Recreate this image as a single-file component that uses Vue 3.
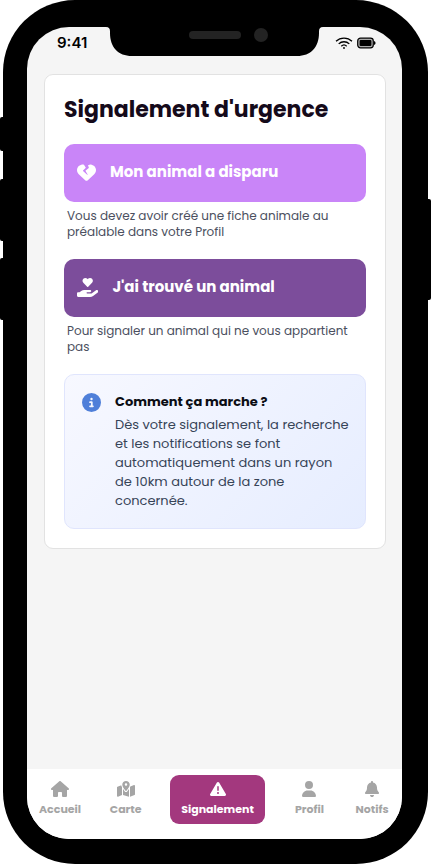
<script setup>
const icons = {
  house: {
    box: '0 0 576 512',
    d: 'M575.8 255.5c0 18-15 32.1-32 32.1h-32l.7 160.2c0 2.7-.2 5.4-.5 8.1V472c0 22.1-17.9 40-40 40H456c-1.1 0-2.2 0-3.3-.1c-1.4 .1-2.8 .1-4.2 .1H416 392c-22.1 0-40-17.9-40-40V448 384c0-17.7-14.3-32-32-32H256c-17.7 0-32 14.3-32 32v64 24c0 22.1-17.9 40-40 40H160 128.1c-1.5 0-3-.1-4.5-.2c-1.2 .1-2.4 .2-3.6 .2H104c-22.1 0-40-17.9-40-40V360c0-.9 0-1.9 .1-2.8V287.6H32c-18 0-32-14-32-32.1c0-9 3-17 10-24L266.4 8c7-7 15-8 22-8s15 2 21 7L564.8 231.5c8 7 12 15 11 24z',
  },
  map: {
    box: '0 0 576 512',
    d: 'M408 120c0 54.6-73.1 151.9-105.2 192c-7.7 9.6-22 9.6-29.6 0C241.1 271.9 168 174.6 168 120C168 53.7 221.7 0 288 0s120 53.7 120 120zm8 80.4c3.5-6.9 6.7-13.8 9.6-20.6c.5-1.2 1-2.5 1.5-3.7l116-46.4C558.9 123.4 576 135 576 152V422.8c0 9.8-6 18.6-15.1 22.3L416 503V200.4zM137.6 138.3c2.4 14.1 7.2 28.3 12.8 41.5c2.9 6.8 6.1 13.7 9.6 20.6V451.8L32.9 502.7C17.1 509 0 497.4 0 480.4V209.6c0-9.8 6-18.6 15.1-22.3l122.6-49zM327.8 332c13.9-17.4 35.7-45.7 56.2-77V504.3L192 449.4V255c20.5 31.3 42.3 59.6 56.2 77c20.5 25.6 59.1 25.6 79.6 0zM288 152a40 40 0 1 0 0-80 40 40 0 1 0 0 80z',
  },
  warning: {
    box: '0 0 512 512',
    d: 'M256 32c14.2 0 27.3 7.5 34.5 19.8l216 368c7.3 12.4 7.3 27.7 .2 40.1S486.3 480 472 480H40c-14.3 0-27.6-7.7-34.7-20.1s-7-27.8 .2-40.1l216-368C228.7 39.5 241.8 32 256 32zm0 128c-13.3 0-24 10.7-24 24V296c0 13.3 10.7 24 24 24s24-10.7 24-24V184c0-13.3-10.7-24-24-24zm32 224a32 32 0 1 0 -64 0 32 32 0 1 0 64 0z',
  },
  user: {
    box: '0 0 448 512',
    d: 'M224 256A128 128 0 1 0 224 0a128 128 0 1 0 0 256zm-45.7 48C79.8 304 0 383.8 0 482.3C0 498.7 13.3 512 29.7 512H418.3c16.4 0 29.7-13.3 29.7-29.7C448 383.8 368.2 304 269.7 304H178.3z',
  },
  bell: {
    box: '0 0 448 512',
    d: 'M224 0c-17.7 0-32 14.3-32 32V51.2C119 66 64 130.6 64 208v18.8c0 47-17.3 92.4-48.5 127.6l-7.4 8.3c-8.4 9.4-10.4 22.9-5.3 34.4S19.4 416 32 416H416c12.6 0 24-7.4 29.2-18.9s3.1-25-5.3-34.4l-7.4-8.3C401.3 319.2 384 273.9 384 226.8V208c0-77.4-55-142-128-156.8V32c0-17.7-14.3-32-32-32zm45.3 493.3c12-12 18.7-28.3 18.7-45.3H224 160c0 17 6.7 33.3 18.7 45.3s28.3 18.7 45.3 18.7s33.3-6.7 45.3-18.7z',
  },
  info: {
    box: '0 0 512 512',
    d: 'M256 512A256 256 0 1 0 256 0a256 256 0 1 0 0 512zM216 336h24V272H216c-13.3 0-24-10.7-24-24s10.7-24 24-24h48c13.3 0 24 10.7 24 24v88h8c13.3 0 24 10.7 24 24s-10.7 24-24 24H216c-13.3 0-24-10.7-24-24s10.7-24 24-24zm40-208a32 32 0 1 1 0 64 32 32 0 1 1 0-64z',
  },
  heartCrack: {
    box: '0 0 512 512',
    d: 'M119.4 44.1c23.3-3.9 46.8-1.9 68.6 5.3l49.8 77.5-75.4 75.4c-1.5 1.5-2.4 3.6-2.3 5.8s1 4.2 2.6 5.7l112 104c2.9 2.7 7.4 2.9 10.5 .3s3.8-7 1.7-10.4l-60.4-98.1 90.7-75.6c2.6-2.1 3.5-5.7 2.4-8.8L296.8 61.8c28.5-16.7 62.4-23.2 95.7-17.6C461.5 55.6 512 115.2 512 185.1v5.8c0 41.5-17.2 81.2-47.6 109.5L283.7 469.1c-7.5 7-17.4 10.9-27.7 10.9s-20.2-3.9-27.7-10.9L47.6 300.4C17.2 272.1 0 232.4 0 190.9v-5.8c0-69.9 50.5-129.5 119.4-141z',
  },
  handHeart: {
    box: '0 0 576 512',
    d: 'M148 76.6C148 34.3 182.3 0 224.6 0c20.3 0 39.8 8.1 54.1 22.4l9.3 9.3 9.3-9.3C311.6 8.1 331.1 0 351.4 0C393.7 0 428 34.3 428 76.6c0 20.3-8.1 39.8-22.4 54.1L302.1 234.1c-7.8 7.8-20.5 7.8-28.3 0L170.4 130.7C156.1 116.3 148 96.9 148 76.6zM568.2 336.3c13.1 17.8 9.3 42.8-8.5 55.9L433.1 485.5c-23.4 17.2-51.6 26.5-80.7 26.5H192 32c-17.7 0-32-14.3-32-32V416c0-17.7 14.3-32 32-32H68.8l44.9-36c22.7-18.2 50.9-28 80-28H272h16 64c17.7 0 32 14.3 32 32s-14.3 32-32 32H288 272c-8.8 0-16 7.2-16 16s7.2 16 16 16H392.6l119.7-88.2c17.8-13.1 42.8-9.3 55.9 8.5z',
  },
}

const actions = [
  {
    label: 'Mon animal a disparu',
    icon: icons.heartCrack,
    tone: 'lost',
    hint: 'Vous devez avoir créé une fiche animale au préalable dans votre Profil',
  },
  {
    label: "J'ai trouvé un animal",
    icon: icons.handHeart,
    tone: 'found',
    hint: 'Pour signaler un animal qui ne vous appartient pas',
  },
]

const tabs = [
  { label: 'Accueil', icon: icons.house },
  { label: 'Carte', icon: icons.map },
  { label: 'Signalement', icon: icons.warning, active: true },
  { label: 'Profil', icon: icons.user },
  { label: 'Notifs', icon: icons.bell },
]
</script>

<template>
  <div class="phone">
    <span class="side side-mute"></span>
    <span class="side side-up"></span>
    <span class="side side-down"></span>
    <span class="side side-power"></span>

    <div class="screen">
      <header class="status">
        <span class="time">9:41</span>
        <svg class="notch" viewBox="0 0 217 29" aria-hidden="true">
          <path d="M0 0C3 0 4 1.500 4 4.500V6C4 20 12 29 26 29H191C205 29 213 20 213 6V4.500C213 1.500 214 0 217 0Z" fill="#000" />
          <rect x="83" y="4" width="52" height="8" rx="4" fill="#232323" />
          <circle cx="155" cy="8" r="7" fill="#232323" />
        </svg>
        <span class="signals">
          <svg width="18" height="12" viewBox="0 0 18 12" fill="none" stroke="#000" stroke-width="1.300" aria-hidden="true">
            <path d="M1 4.300A11.500 11.500 0 0 1 17 4.300" />
            <path d="M3.700 6.900A7.600 7.600 0 0 1 14.300 6.900" />
            <path d="M6.300 9.200A3.900 3.900 0 0 1 11.700 9.200" />
            <circle cx="9" cy="11" r="0.900" fill="#000" stroke="none" />
          </svg>
          <svg width="19" height="12" viewBox="0 0 19 12" aria-hidden="true">
            <rect x="0.700" y="1.200" width="15.600" height="9.600" rx="2.800" fill="#aaa" stroke="#000" stroke-width="1.200" />
            <rect x="2.600" y="3" width="11.800" height="6" rx="1" fill="#000" />
            <path d="M17 4q1.600.500 1.600 2t-1.600 2z" fill="#000" />
          </svg>
        </span>
      </header>

      <main class="content">
        <section class="card">
          <h1>Signalement d'urgence</h1>

          <div v-for="action in actions" :key="action.tone" class="action">
            <button type="button" :class="['action-button', action.tone]">
              <svg class="action-icon" :viewBox="action.icon.box" aria-hidden="true">
                <path :d="action.icon.d" />
              </svg>
              <span>{{ action.label }}</span>
            </button>
            <p class="hint">{{ action.hint }}</p>
          </div>

          <aside class="info">
            <svg class="info-icon" :viewBox="icons.info.box" aria-hidden="true">
              <path :d="icons.info.d" />
            </svg>
            <div>
              <h2>Comment ça marche ?</h2>
              <p>
                Dès votre signalement, la recherche et les notifications se font
                automatiquement dans un rayon de&nbsp;10km autour de la zone concernée.
              </p>
            </div>
          </aside>
        </section>
      </main>

      <nav class="tabs">
        <a v-for="tab in tabs" :key="tab.label" href="#" :class="['tab', { active: tab.active }]">
          <svg class="tab-icon" :viewBox="tab.icon.box" aria-hidden="true">
            <path :d="tab.icon.d" />
          </svg>
          <span>{{ tab.label }}</span>
        </a>
      </nav>
    </div>
  </div>
</template>

<style>
body {
  margin: 0;
  background: #fff;
}
</style>

<style scoped>
.phone {
  position: relative;
  display: flex;
  box-sizing: border-box;
  min-height: 100vh;
  margin: 0 3px;
  padding: 27px 26px 25px 24px;
  border-radius: 72px;
  background: #000;
  font-family: Poppins, Inter, "Liberation Sans", sans-serif;
}

.side {
  position: absolute;
  width: 8px;
  border-radius: 2px;
  background: #000;
}

.side-mute {
  top: 117px;
  left: -3px;
  height: 34px;
}

.side-up {
  top: 179px;
  left: -3px;
  height: 62px;
}

.side-down {
  top: 258px;
  left: -3px;
  height: 62px;
}

.side-power {
  top: 199px;
  right: -3px;
  height: 101px;
}

.screen {
  display: flex;
  flex: 1;
  flex-direction: column;
  min-width: 0;
  overflow: hidden;
  border-radius: 42px;
  background: #f5f5f5;
}

.status {
  display: grid;
  grid-template-columns: 1fr 217px 1fr;
  height: 29px;
}

.time {
  align-self: center;
  padding: 2px 0 0 30px;
  color: #000;
  font: 600 15px/20px Inter, sans-serif;
}

.notch {
  width: 217px;
  height: 29px;
}

.signals {
  display: flex;
  align-items: center;
  gap: 4px;
  padding: 3px 0 0 12px;
}

.content {
  flex: 1;
  padding: 18px 16px 18px 17px;
}

.card {
  padding: 17px 19px 19px;
  border: 1px solid #e2e2e2;
  border-radius: 9px;
  background: #fff;
}

h1 {
  margin: 0 0 16px;
  color: #150a1a;
  font-size: 22px;
  font-weight: 700;
  line-height: 36px;
}

.action {
  margin-bottom: 19px;
}

.action-button {
  display: flex;
  align-items: center;
  gap: 14px;
  width: 100%;
  height: 58px;
  padding: 0 13px 2px;
  border: 0;
  border-radius: 10px;
  color: #fff;
  font-family: inherit;
  font-size: 15px;
  font-weight: 700;
  line-height: 20px;
}

.lost {
  background: #c985f8;
}

.found {
  background: #7c4d9b;
}

.action-icon {
  height: 19px;
  fill: currentColor;
}

.hint {
  margin: 6px 3px 0;
  color: #4b5060;
  font-size: 12px;
  line-height: 16px;
}

.info {
  display: flex;
  gap: 14px;
  padding: 18px 14px 18px 17px;
  border: 1px solid #e0e5fd;
  border-radius: 10px;
  background: linear-gradient(135deg, #f7f8ff, #e6edff);
}

.info-icon {
  flex: none;
  width: 19px;
  height: 19px;
  fill: #4f7fd9;
}

.info h2 {
  margin: 0 0 5px;
  color: #0b0d14;
  font-size: 13px;
  font-weight: 700;
  line-height: 17px;
}

.info p {
  margin: 0;
  color: #374458;
  font-size: 13px;
  line-height: 19px;
}

.tabs {
  display: flex;
  align-items: flex-start;
  justify-content: space-between;
  box-sizing: border-box;
  height: 70px;
  padding: 6px 12px 0;
  background: #fff;
}

.tab {
  display: flex;
  flex-direction: column;
  align-items: center;
  gap: 5px;
  box-sizing: border-box;
  min-width: 36px;
  padding: 6px 0 7px;
  border-radius: 9px;
  color: #a5a5a5;
  font-size: 11px;
  font-weight: 700;
  line-height: 15px;
  text-decoration: none;
}

.tab.active {
  padding: 6px 11px 7px;
  background: #a3387e;
  color: #fff;
}

.tab-icon {
  height: 16px;
  fill: currentColor;
}
</style>
